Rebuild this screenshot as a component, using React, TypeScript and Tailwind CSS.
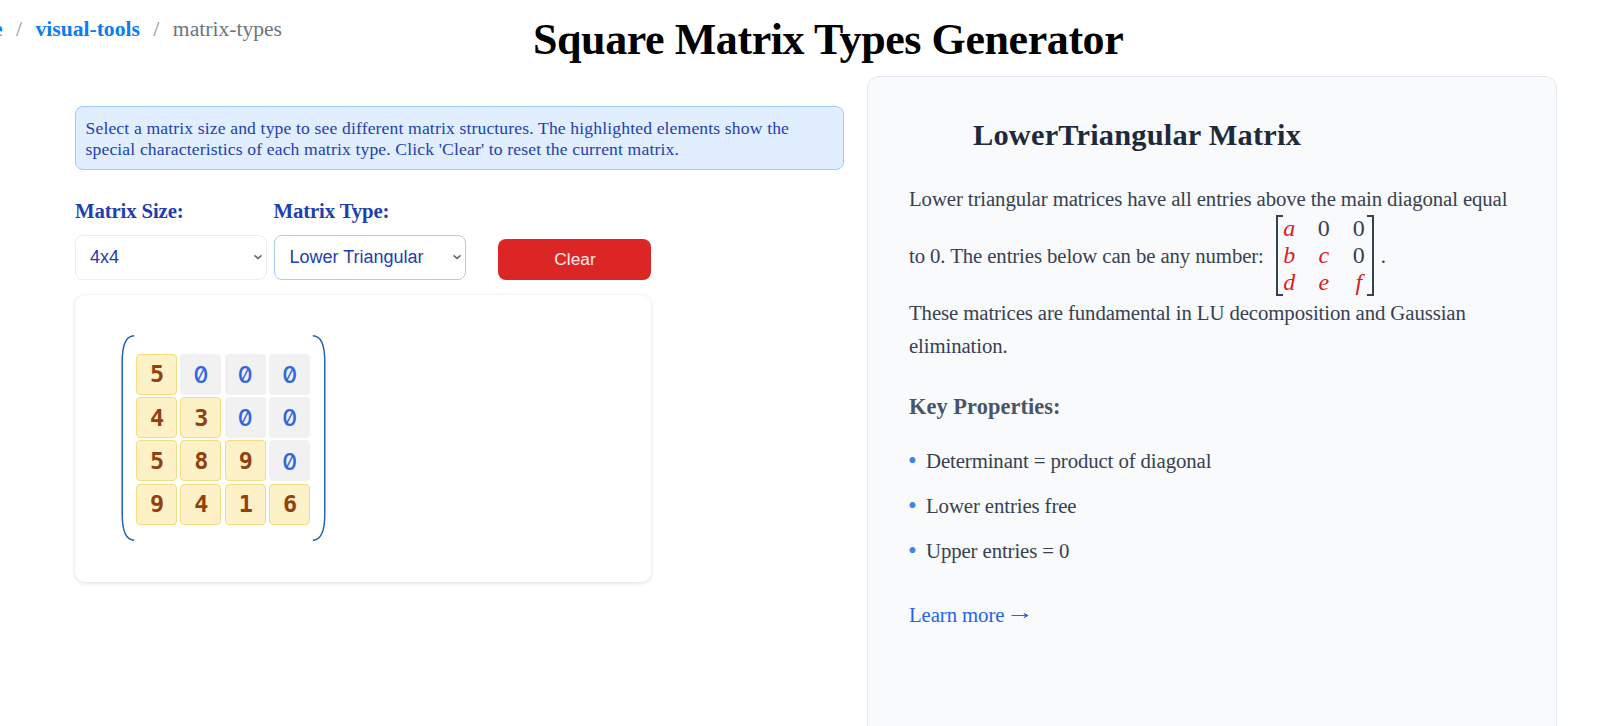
import React from "react";

const matrix = [
  [5, 0, 0, 0],
  [4, 3, 0, 0],
  [5, 8, 9, 0],
  [9, 4, 1, 6],
];

const example = [
  ["a", "0", "0"],
  ["b", "c", "0"],
  ["d", "e", "f"],
];

const properties = ["Determinant = product of diagonal", "Lower entries free", "Upper entries = 0"];

function Chevron() {
  return (
    <svg className="pointer-events-none absolute top-[18px] right-[4px]" width="10" height="8" viewBox="0 0 10 8" fill="none">
      <path d="M1.5 2.4 5 5.4 8.5 2.4" stroke="#666" strokeWidth="1.5" />
    </svg>
  );
}

function Field({ label, value, active }: { label: string; value: string; active?: boolean }) {
  return (
    <label className="flex w-[192px] flex-col">
      <span className="h-[36px] text-[20.8px] leading-[24px] font-bold tracking-[-0.15px] text-[#1e40af]">{label}</span>
      <span className="relative block">
        <select
          defaultValue={value}
          className={
            active
              ? "block h-[45px] w-[192px] appearance-none rounded-lg border border-[#a9cdf5] bg-white pl-[15px] font-['Liberation_Sans',sans-serif] text-[18px] text-[#1e40af] outline-none"
              : "block h-[45px] w-[192px] appearance-none rounded-lg border border-[#e9edf2] bg-white pl-[14px] font-['Liberation_Sans',sans-serif] text-[18px] text-[#1e40af] outline-none"
          }
        >
          <option>{value}</option>
        </select>
        <Chevron />
      </span>
    </label>
  );
}

function Paren({ flip }: { flip?: boolean }) {
  return (
    <svg className={flip ? "ml-[2px] -scale-x-100" : ""} width="14" height="206" viewBox="0 0 14 206" fill="none">
      <path d="M13.2 .8C5 .8 1.2 11 1.2 27V179C1.2 195 5 205.2 13.2 205.2" stroke="#2563b5" strokeWidth="1.5" />
    </svg>
  );
}

function ExampleMatrix() {
  return (
    <span className="ml-[12px] inline-flex h-[81px] w-[98px] items-stretch leading-none">
      <span className="w-[7px] border-y-2 border-l-2 border-[#334155]" />
      <span className="grid w-[84px] grid-cols-[13px_1fr_14px] grid-rows-[26px_27px_27px] items-center pr-[1px] text-[24px]">
        {example.flat().map((c, i) =>
          c === "0" ? (
            <span key={i} className="text-center text-[#374151]">0</span>
          ) : (
            <span key={i} className="text-center text-[#e01b1b] italic">{c}</span>
          )
        )}
      </span>
      <span className="w-[7px] border-y-2 border-r-2 border-[#334155]" />
    </span>
  );
}

export default function App() {
  return (
    <div className="h-[726px] w-[1615px] overflow-hidden bg-white font-['Liberation_Serif',serif]">
      <header className="flex h-[76px]">
        <nav className="flex h-[24px] w-[282px] justify-end pt-[16px] text-[21.6px] leading-[27px] whitespace-nowrap">
          <a className="font-bold text-[#007bff]">Home</a>
          <span className="mx-[13.5px] text-[#8a9197]">/</span>
          <a className="font-bold text-[#0d7cf2]">visual-tools</a>
          <span className="mx-[13.5px] text-[#8a9197]">/</span>
          <span className="text-[#6c757d]">matrix-types</span>
        </nav>
        <h1 className="ml-[251px] pt-[15px] text-[44px] leading-[50px] font-bold tracking-[-0.42px] whitespace-nowrap text-black">
          Square Matrix Types Generator
        </h1>
      </header>
      <main className="flex">
        <section className="w-[867px] pt-[30px] pl-[75px]">
          <p className="h-[64px] w-[769px] rounded-lg border border-[#9fccf5] bg-[#e0eeff] pt-[11px] pl-[9.5px] text-[17.6px] leading-[21px] tracking-[0.145px] whitespace-nowrap text-[#1e40af]">
            Select a matrix size and type to see different matrix structures. The highlighted elements show the
            <br />
            special characteristics of each matrix type. Click 'Clear' to reset the current matrix.
          </p>
          <div className="mt-[29px] flex w-[576px] items-end gap-[6.5px]">
            <Field label="Matrix Size:" value="4x4" />
            <Field label="Matrix Type:" value="Lower Triangular" active />
            <button className="ml-auto h-[41px] w-[153px] rounded-lg bg-[#dc2626] pl-[1px] font-['Liberation_Sans',sans-serif] text-[17.3px] text-[#fdeeee]">
              Clear
            </button>
          </div>
          <div className="mt-[15px] flex h-[287px] w-[576px] items-start rounded-[10px] bg-white pt-[40px] pl-[46px] shadow-[0_1px_4px_rgba(0,0,0,0.14)]">
            <Paren />
            <div className="mt-[19px] ml-[1px] grid grid-cols-4 gap-x-[3.4px] gap-y-[2.2px]">
              {matrix.flatMap((row, r) =>
                row.map((n, c) =>
                  c <= r ? (
                    <span key={`${r}-${c}`} className="flex size-[41px] items-center justify-center rounded-[4px] border border-[#f5dc80] bg-[#fdf1c7] pt-[1px] pl-[1px] font-['DejaVu_Sans_Mono',monospace] text-[23.5px] font-bold text-[#92400e]">
                      {n}
                    </span>
                  ) : (
                    <span key={`${r}-${c}`} className="flex size-[41px] items-center justify-center rounded-[4px] bg-[#f1f1f2] pt-[2px] font-['Inter',sans-serif] text-[23px] font-medium text-[#2f66e0] [font-feature-settings:'zero']">
                      {n}
                    </span>
                  )
                )
              )}
            </div>
            <Paren flip />
          </div>
        </section>
        <aside className="h-[800px] w-[690px] rounded-xl border border-[#e2e8f0] bg-[#f8fafc] pl-[41px] text-[20.8px] leading-[33px] tracking-[-0.11px] whitespace-nowrap text-[#374151]">
          <h2 className="mt-[40px] pl-[64px] text-[30.4px] leading-[36px] font-bold tracking-[0.19px] text-[#1e293b]">LowerTriangular Matrix</h2>
          <p className="mt-[29px]">Lower triangular matrices have all entries above the main diagonal equal</p>
          <p className="flex h-[81px] items-center">
            to 0. The entries below can be any number:
            <ExampleMatrix />
            <span className="ml-[7px]">.</span>
          </p>
          <p>
            These matrices are fundamental in LU decomposition and Gaussian
            <br />
            elimination.
          </p>
          <h3 className="mt-[28px] text-[22.4px] font-bold tracking-[0.05px] text-[#475569]">Key Properties:</h3>
          <ul className="mt-[21px] flex flex-col gap-[12px]">
            {properties.map((p) => (
              <li key={p} className="flex">
                <span className="-ml-px w-[18px] pt-px text-[25px] leading-[32px] text-[#3b82f6]">•</span>
                {p}
              </li>
            ))}
          </ul>
          <a className="mt-[31px] block text-[#2563eb]">
            Learn more <span className="inline-block origin-left -translate-x-[3px] -translate-y-[3px] scale-x-[1.35]">→</span>
          </a>
        </aside>
      </main>
    </div>
  );
}
